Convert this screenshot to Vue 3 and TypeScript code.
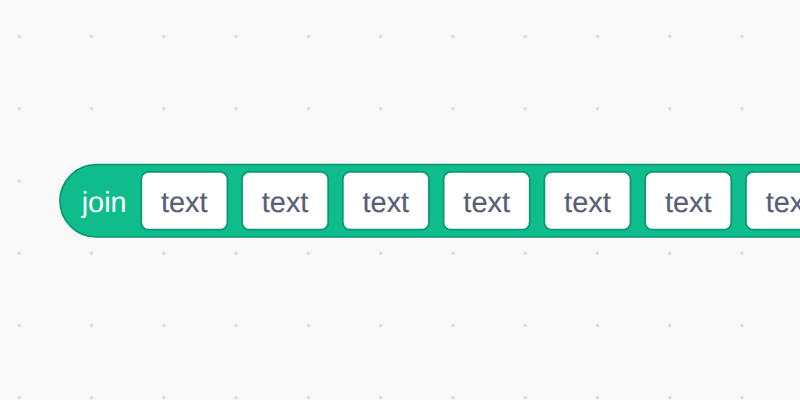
<script setup lang="ts">
interface Field {
  x: number
  label: string
}

const scale = 1.806
const fieldWidth = 47.7
const pitch = 55.8
const fields: Field[] = Array.from({ length: 7 }, (_, i) => ({
  x: 45 + i * pitch,
  label: 'text',
}))
</script>

<template>
  <main class="workspace">
    <svg class="canvas" viewBox="0 0 800 400" width="800" height="400">
      <defs>
        <pattern id="grid" x="-17" y="0.3" width="72.27" height="72.27" patternUnits="userSpaceOnUse">
          <path class="dot" d="M34.5 36.1h3.6M36.3 34.3v3.6" />
        </pattern>
      </defs>
      <rect width="800" height="400" fill="url(#grid)" />
      <g :transform="`translate(60 164.7) scale(${scale})`">
        <path class="block" d="M20 0H500V40H20A20 20 0 0 1 20 0Z" />
        <text class="label" x="12" y="26.3">join</text>
        <g v-for="field in fields" :key="field.x" :transform="`translate(${field.x} 4)`">
          <rect class="field" :width="fieldWidth" height="32" rx="4" />
          <text class="value" :x="fieldWidth / 2" y="22.3">{{ field.label }}</text>
        </g>
      </g>
    </svg>
  </main>
</template>

<style scoped>
.workspace {
  width: 800px;
  height: 400px;
  overflow: hidden;
  background: #f9f9f9;
}
.canvas {
  display: block;
}
.dot {
  stroke: #ddd;
  stroke-width: 1.806;
  fill: none;
}
.block {
  fill: #0fbd8c;
  stroke: #0b996f;
  stroke-width: 1;
}
.field {
  fill: #fff;
  stroke: #0b996f;
  stroke-width: 1;
}
.label,
.value {
  font-family: "Liberation Sans", Arial, sans-serif;
  font-size: 16px;
  text-rendering: geometricPrecision;
}
.label {
  fill: #fff;
}
.value {
  fill: #575e75;
  stroke: #575e75;
  stroke-width: 0.1;
  text-anchor: middle;
}
</style>
